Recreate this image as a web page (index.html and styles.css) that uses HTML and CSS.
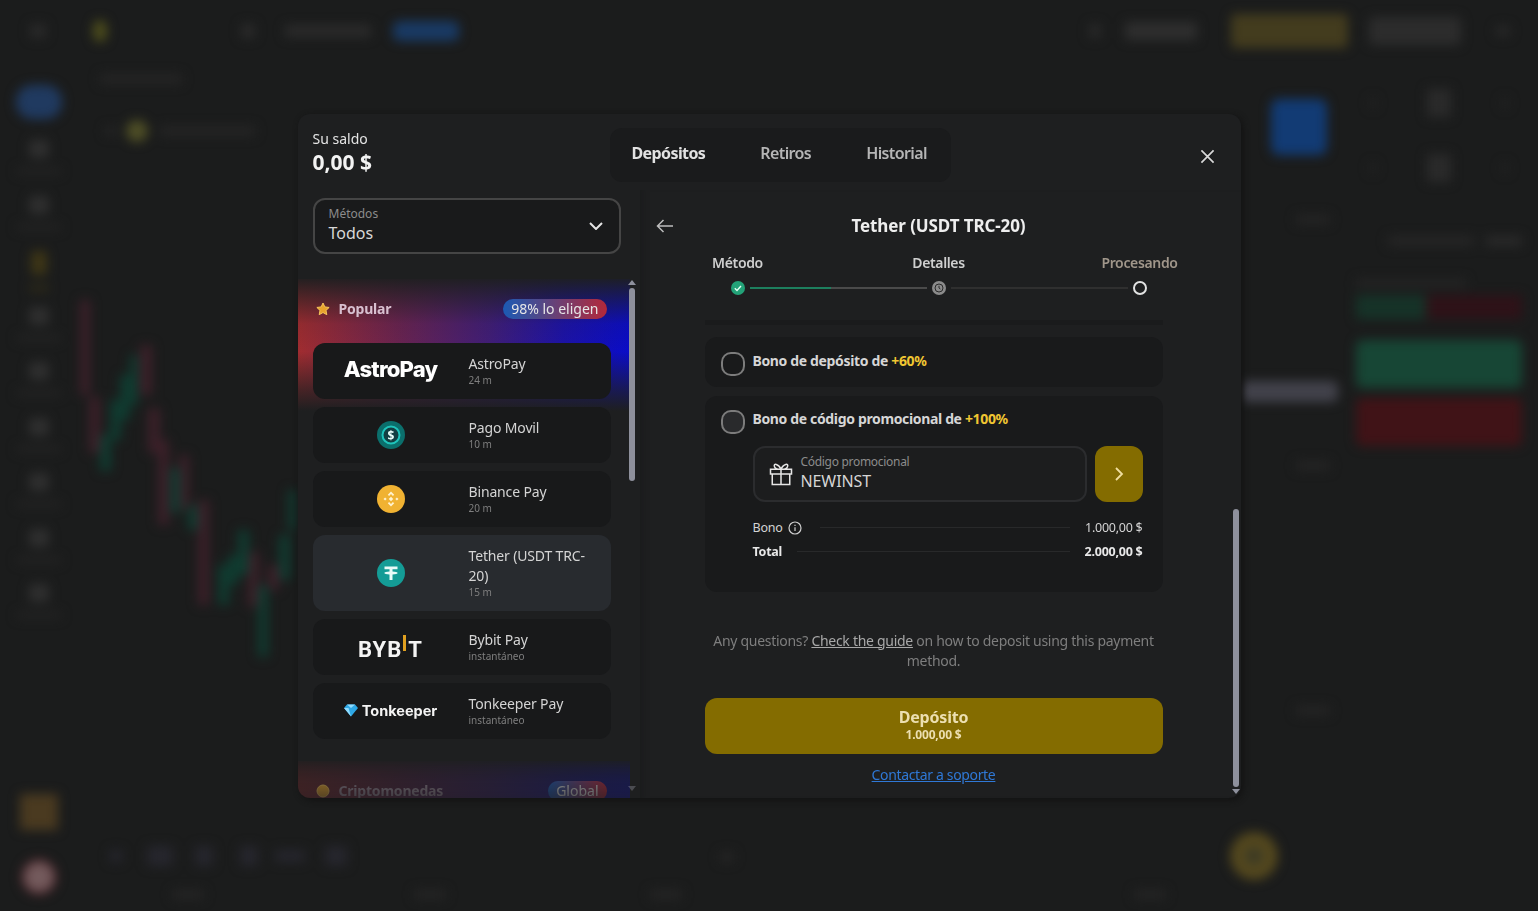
FILE: index.html
```html
<!DOCTYPE html>
<html lang="es">
<head>
<meta charset="utf-8">
<title>Depósitos</title>
<link rel="stylesheet" href="styles.css">
</head>
<body>
<div class="backdrop">
  <header class="topbar">
    <div class="tb-group">
      <span class="blob b-menu"></span>
      <span class="blob b-logo"></span>
      <span class="blob b-search"></span>
      <span class="blob b-reg"></span>
      <span class="blob b-login"></span>
    </div>
    <div class="tb-group">
      <span class="blob b-bell"></span>
      <span class="blob b-bal"></span>
      <span class="blob b-gold"></span>
      <span class="blob b-with"></span>
      <span class="blob b-more"></span>
    </div>
  </header>
  <div class="main">
    <nav class="sidebar">
      <span class="blob side-top"></span>
      <div class="nav-item"><i></i><b></b></div>
      <div class="nav-item"><i></i><b></b></div>
      <div class="nav-item nav-gold"><i></i><b></b></div>
      <div class="nav-item"><i></i><b></b></div>
      <div class="nav-item"><i></i><b></b></div>
      <div class="nav-item"><i></i><b></b></div>
      <div class="nav-item"><i></i><b></b></div>
      <div class="nav-item"><i></i><b></b></div>
      <div class="nav-item"><i></i><b></b></div>
      <span class="blob side-orange"></span>
      <span class="blob side-red"></span>
    </nav>
    <svg class="chart" viewBox="78 62 1262 849" aria-hidden="true">
      <g class="c-red">
        <rect x="80" y="300" width="10" height="95"/><rect x="89" y="397" width="11" height="56"/>
        <rect x="140" y="345" width="12" height="50"/><rect x="148" y="408" width="12" height="45"/>
        <rect x="158" y="440" width="11" height="85"/><rect x="179" y="455" width="10" height="55"/>
        <rect x="198" y="500" width="11" height="105"/><rect x="248" y="552" width="11" height="55"/>
        <rect x="268" y="565" width="11" height="25"/>
      </g>
      <g class="c-green">
        <rect x="100" y="435" width="11" height="36"/><rect x="110" y="400" width="11" height="40"/>
        <rect x="120" y="375" width="10" height="45"/><rect x="130" y="355" width="8" height="50"/>
        <rect x="170" y="468" width="10" height="45"/><rect x="188" y="505" width="10" height="25"/>
        <rect x="218" y="565" width="11" height="40"/><rect x="228" y="555" width="10" height="30"/>
        <rect x="238" y="530" width="11" height="45"/><rect x="258" y="585" width="10" height="72"/>
        <rect x="279" y="535" width="11" height="45"/><rect x="288" y="490" width="8" height="40"/>
      </g>
      <rect class="c-faint" x="100" y="74" width="82" height="10"/>
      <rect class="c-faint" x="105" y="127" width="12" height="8"/>
      <circle class="c-yellow" cx="137" cy="131" r="11"/>
      <rect class="c-faint" x="160" y="126" width="95" height="10"/>
      <g class="c-tool">
        <rect x="110" y="850" width="12" height="12"/><rect x="147" y="846" width="26" height="20"/>
        <rect x="195" y="846" width="18" height="20"/><rect x="240" y="846" width="18" height="20"/>
        <rect x="275" y="850" width="30" height="12"/><rect x="325" y="846" width="22" height="20"/>
      </g>
      <g class="c-faint">
        <rect x="172" y="890" width="32" height="9"/><rect x="414" y="890" width="32" height="9"/>
        <rect x="650" y="890" width="32" height="9"/><rect x="1134" y="890" width="32" height="9"/>
        <rect x="1296" y="215" width="34" height="9"/><rect x="1296" y="461" width="34" height="9"/>
        <rect x="1296" y="706" width="34" height="9"/><rect x="720" y="852" width="14" height="10"/>
      </g>
      <rect class="c-blue" x="1271" y="99" width="56" height="56" rx="8"/>
      <rect class="c-pill" x="1240" y="381" width="98" height="21" rx="6"/>
      <circle class="c-coin" cx="1254" cy="856" r="24"/>
      <circle class="c-coin-in" cx="1254" cy="856" r="9"/>
    </svg>
    <aside class="trade">
      <div class="tr-row"><i></i><b></b><i></i></div>
      <div class="tr-row"><i></i><b></b><i></i></div>
      <div class="tr-pills"><span></span><span></span></div>
      <span class="tr-label"></span>
      <div class="tr-bar"><span class="tr-up"></span><span class="tr-down"></span></div>
      <div class="tr-btn tr-buy"></div>
      <div class="tr-btn tr-sell"></div>
    </aside>
  </div>
</div>

<div class="overlay">
  <section class="modal">
    <header class="modal-head">
      <div class="balance">
        <span class="balance-label">Su saldo</span>
        <strong class="balance-value">0,00 $</strong>
      </div>
      <div class="tabs">
        <span class="tab tab-active">Depósitos</span>
        <span class="tab">Retiros</span>
        <span class="tab">Historial</span>
      </div>
      <svg class="close" viewBox="0 0 16 16" aria-label="Cerrar"><path d="M1.5 1.5l13 13M14.5 1.5l-13 13"/></svg>
    </header>

    <div class="modal-body">
      <div class="left-pane">
        <div class="select">
          <div class="select-text">
            <span class="select-label">Métodos</span>
            <span class="select-value">Todos</span>
          </div>
          <svg class="select-arrow" viewBox="0 0 14 8"><path d="M1 1l6 6 6-6"/></svg>
        </div>
        <div class="list-wrap">
          <div class="list">
            <div class="group">
              <div class="group-head">
                <svg class="star" viewBox="0 0 24 24"><path d="M12 3l2.800 5.900 6.400.8-4.700 4.400 1.200 6.400L12 17.300l-5.700 3.200 1.200-6.400L2.800 9.700l6.400-.8z"/></svg>
                <span class="group-title">Popular</span>
                <span class="badge">98% lo eligen</span>
              </div>
              <div class="method">
                <div class="method-logo"><span class="logo-astro">AstroPay</span></div>
                <div class="method-info"><span class="m-name">AstroPay</span><span class="m-time">24 m</span></div>
              </div>
              <div class="method">
                <div class="method-logo">
                  <svg class="coin" viewBox="0 0 28 28"><circle cx="14" cy="14" r="14" fill="#0b6f6c"/><circle cx="14" cy="14" r="8.500" fill="#123f42" stroke="#1fc4bb" stroke-width="2"/><text x="14" y="18.500" text-anchor="middle" class="coin-text">$</text></svg>
                </div>
                <div class="method-info"><span class="m-name">Pago Movil</span><span class="m-time">10 m</span></div>
              </div>
              <div class="method">
                <div class="method-logo">
                  <svg class="coin" viewBox="0 0 28 28"><circle cx="14" cy="14" r="14" fill="#f0b232"/><g fill="#fff3d0"><path d="M14 6.500l3.200 3.200-1.300 1.300L14 9.100l-1.900 1.900-1.300-1.300z"/><path d="M14 21.500l3.200-3.200-1.300-1.300L14 18.900l-1.900-1.900-1.300 1.300z"/><path d="M6.500 14l1.600-1.600 1.600 1.600-1.600 1.600z"/><path d="M18.300 14l1.600-1.600 1.600 1.600-1.600 1.600z"/><path d="M14 11.700l2.300 2.300-2.300 2.300-2.300-2.300z"/></g></svg>
                </div>
                <div class="method-info"><span class="m-name">Binance Pay</span><span class="m-time">20 m</span></div>
              </div>
              <div class="method method-active">
                <div class="method-logo">
                  <svg class="coin" viewBox="0 0 28 28"><circle cx="14" cy="14" r="14" fill="#149c96"/><path fill="#e8fbf8" d="M7.500 7.500h13v2.800h-5v2.300c3 .15 5.200.7 5.200 1.400s-2.200 1.250-5.200 1.400v5.600h-3v-5.600c-3-.15-5.200-.7-5.200-1.400s2.200-1.250 5.200-1.400v-2.300h-5z"/></svg>
                </div>
                <div class="method-info"><span class="m-name">Tether (USDT TRC-20)</span><span class="m-time">15 m</span></div>
              </div>
              <div class="method">
                <div class="method-logo"><span class="logo-bybit">BYB<i class="bybit-bar"></i>T</span></div>
                <div class="method-info"><span class="m-name">Bybit Pay</span><span class="m-time">instantáneo</span></div>
              </div>
              <div class="method">
                <div class="method-logo logo-ton">
                  <svg class="gem" viewBox="0 0 14 12"><path fill="#2ea8e6" d="M0 3.500L3 0h8l3 3.500L7 12z"/><path fill="#8fdcff" d="M3 0h8l-4 3.500zM0 3.500h4.500L7 12z"/></svg>
                  <span>Tonkeeper</span>
                </div>
                <div class="method-info"><span class="m-name">Tonkeeper Pay</span><span class="m-time">instantáneo</span></div>
              </div>
            </div>
            <div class="group group-next">
              <div class="group-head">
                <svg class="star" viewBox="0 0 24 24"><circle cx="12" cy="12" r="9"/></svg>
                <span class="group-title">Criptomonedas</span>
                <span class="badge">Global</span>
              </div>
            </div>
          </div>
          <div class="scroll scroll-left"><i class="sc-up"></i><b></b><i class="sc-down"></i></div>
        </div>
      </div>

      <div class="right-pane">
        <div class="title-row">
          <svg class="back" viewBox="0 0 18 14"><path d="M17 7H1.500M7.500 1l-6 6 6 6"/></svg>
          <h2 class="title">Tether (USDT TRC-20)</h2>
          <span></span>
        </div>
        <div class="steps">
          <span class="step-label">Método</span>
          <span class="step-label">Detalles</span>
          <span class="step-label step-todo">Procesando</span>
        </div>
        <div class="track">
          <svg class="dot" viewBox="0 0 14 14"><circle cx="7" cy="7" r="7" fill="#23a278"/><path d="M3.800 7.200l2.200 2.200 4-4.300" fill="none" stroke="#e6fff4" stroke-width="1.400"/></svg>
          <span class="line"><i></i></span>
          <svg class="dot" viewBox="0 0 14 14"><circle cx="7" cy="7" r="7" fill="#8b8b8b"/><circle cx="7" cy="7" r="4" fill="none" stroke="#2a2a2a" stroke-width="1"/><path d="M7 4.800V7l1.400 1" fill="none" stroke="#2a2a2a" stroke-width="1"/></svg>
          <span class="line line-off"></span>
          <span class="dot dot-empty"></span>
        </div>
        <div class="scroll-area">
          <div class="content">
            <div class="card-sliver"></div>
            <div class="card card-simple">
              <span class="radio"></span>
              <span class="card-title">Bono de depósito de <em>+60%</em></span>
            </div>
            <div class="card card-promo">
              <div class="promo-head">
                <span class="radio radio-fill"></span>
                <span class="card-title">Bono de código promocional de <em>+100%</em></span>
              </div>
              <div class="promo-form">
                <div class="promo-input">
                  <svg class="gift" viewBox="0 0 24 24"><path d="M3 8h18v4H3zM4.500 12v9h15v-9M12 8v13M12 8C10 3 5 2.500 6.500 6c.4 1 2 2 5.500 2zM12 8c2-5 7-5.500 5.500-2-.4 1-2 2-5.500 2z"/></svg>
                  <div class="promo-text">
                    <span class="promo-label">Código promocional</span>
                    <span class="promo-value">NEWINST</span>
                  </div>
                </div>
                <div class="promo-go"><svg viewBox="0 0 10 16"><path d="M2 2l6 6-6 6"/></svg></div>
              </div>
              <div class="sum-row">
                <span class="sum-key">Bono</span>
                <svg class="info" viewBox="0 0 14 14"><circle cx="7" cy="7" r="6"/><path d="M7 6.300v3.700M7 3.800v1.100"/></svg>
                <span class="sum-line sum-line-wide"></span>
                <span class="sum-val">1.000,00 $</span>
              </div>
              <div class="sum-row sum-total">
                <span class="sum-key">Total</span>
                <span class="sum-line"></span>
                <span class="sum-val">2.000,00 $</span>
              </div>
            </div>
            <p class="guide">Any questions? <a href="#">Check the guide</a> on how to deposit using this payment method.</p>
            <button class="deposit" type="button"><span class="dep-main">Depósito</span><span class="dep-sub">1.000,00 $</span></button>
            <a class="support" href="#">Contactar a soporte</a>
          </div>
          <div class="scroll scroll-right"><b></b><i class="sc-down"></i></div>
        </div>
      </div>
    </div>
  </section>
</div>
</body>
</html>
```

FILE: styles.css
```css
* { box-sizing: border-box; }
html, body { height: 100%; }
body {
  margin: 0;
  background: #1b1c1c;
  font-family: "Noto Sans", "Open Sans", sans-serif;
  color: #e9e9e9;
  overflow: hidden;
}

/* Blurred page behind the dialog */
.backdrop {
  position: fixed;
  inset: 0;
  display: flex;
  flex-direction: column;
  filter: blur(5.500px);
}
.blob { display: block; flex: none; }
.topbar {
  height: 62px;
  flex: none;
  display: flex;
  justify-content: space-between;
  align-items: center;
  padding: 0 28px 0 30px;
}
.tb-group { display: flex; align-items: center; }
.b-menu { width: 16px; height: 14px; background: #292929; }
.b-logo { width: 14px; height: 22px; margin-left: 47px; background: #4c4c1c; border-radius: 7px; }
.b-search { width: 14px; height: 14px; margin-left: 134px; background: #2a2a2a; }
.b-reg { width: 86px; height: 12px; margin-left: 30px; background: #2b2b2b; }
.b-login { width: 66px; height: 20px; margin-left: 22px; background: #193a64; border-radius: 6px; }
.b-bell { width: 12px; height: 14px; background: #282828; }
.b-bal { width: 72px; height: 18px; margin-left: 24px; background: #2e2e2e; }
.b-gold { width: 117px; height: 34px; margin-left: 34px; background: #433c1e; border-radius: 4px; }
.b-with { width: 92px; height: 28px; margin-left: 21px; background: #2c2c2c; border-radius: 4px; }
.b-more { width: 14px; height: 10px; margin-left: 35px; background: #282828; }

.main { flex: 1; display: flex; min-height: 0; }
.sidebar {
  width: 78px;
  flex: none;
  display: flex;
  flex-direction: column;
  align-items: center;
  padding: 23px 0 19px;
}
.side-top { width: 46px; height: 34px; background: #203a60; border-radius: 16px; margin-bottom: 20px; }
.nav-item { height: 55.500px; display: flex; flex-direction: column; align-items: center; gap: 10px; padding-top: 1px; }
.nav-item i { width: 20px; height: 18px; background: #2f2f2f; border-radius: 4px; }
.nav-item b { width: 44px; height: 6px; background: #242424; }
.nav-gold i { background: #3e3616; height: 24px; width: 16px; }
.nav-gold b { background: #302c18; width: 20px; }
.side-orange { width: 38px; height: 36px; margin-top: auto; background: #4a3a20; }
.side-red { width: 30px; height: 30px; margin-top: 32px; background: #735a5c; border-radius: 50%; box-shadow: 0 0 0 3px #4c2026; }

.chart { flex: 1; min-width: 0; height: 100%; }
.c-red { fill: #3c2029; }
.c-green { fill: #103b30; }
.c-faint { fill: #252525; }
.c-yellow { fill: #4e4e26; }
.c-tool { fill: #26262d; }
.c-blue { fill: #123b74; }
.c-pill { fill: #42424b; }
.c-coin { fill: #54481e; }
.c-coin-in { fill: #3c3a24; }

.trade { width: 198px; flex: none; display: flex; flex-direction: column; padding: 26px 16px 0; }
.tr-row { display: flex; align-items: center; justify-content: space-between; height: 30px; margin-bottom: 35px; padding: 0 14px; }
.tr-row i { width: 6px; height: 10px; background: #232323; }
.tr-row b { width: 24px; height: 28px; background: #2a2a2a; }
.tr-pills { display: flex; justify-content: flex-end; gap: 12px; margin-top: 18px; height: 12px; }
.tr-pills span { height: 10px; width: 36px; background: #2a2a2a; }
.tr-pills span:first-child { width: 86px; background: #262626; }
.tr-label { width: 110px; height: 8px; background: #252525; margin-top: 31px; }
.tr-bar { display: flex; height: 24px; margin-top: 8px; }
.tr-up { width: 70px; background: #163328; }
.tr-down { flex: 1; background: #2e1218; }
.tr-btn { height: 48px; border-radius: 6px; }
.tr-buy { background: #174635; margin-top: 21px; }
.tr-sell { background: #401317; margin-top: 10px; }

/* Dialog */
.overlay {
  position: fixed;
  inset: 0;
  display: flex;
  align-items: center;
  justify-content: center;
}
.modal {
  width: 943px;
  height: 684px;
  background: #1e1f20;
  border-radius: 12px;
  display: flex;
  flex-direction: column;
  overflow: hidden;
  box-shadow: 2px 2px 6px #121212;
}
.modal-head {
  height: 76px;
  flex: none;
  display: flex;
  align-items: flex-start;
  padding: 14px 26px 0 15px;
}
.balance { display: flex; flex-direction: column; width: 297px; }
.balance-label { font-size: 14px; line-height: 22px; color: #e4e4e4; }
.balance-value { font-size: 21px; line-height: 24px; font-weight: 700; color: #f3f3f3; }
.tabs {
  display: flex;
  width: 341px;
  height: 54px;
  align-items: center;
  gap: 55px;
  padding: 0 22px 4px;
  background: #1a1b1c;
  border-radius: 12px;
}
.tab { font-size: 16px; font-weight: 600; color: #b5b5b5; letter-spacing: -0.6px; }
.tab-active { color: #e2e2e2; font-weight: 700; }
.close { width: 15px; height: 15px; margin: 21px 0 0 auto; fill: none; stroke: #d8d8d8; stroke-width: 1.800; }

.modal-body { flex: 1; min-height: 0; display: flex; }
.left-pane { width: 342px; flex: none; display: flex; flex-direction: column; padding-top: 8px; }
.select {
  margin-left: 15px;
  width: 308px;
  height: 56px;
  flex: none;
  border: 2px solid #454545;
  border-radius: 12px;
  background: #191a1b;
  display: flex;
  align-items: center;
  justify-content: space-between;
  padding: 0 16px 0 14px;
}
.select-text { display: flex; flex-direction: column; padding-bottom: 1px; }
.select-label { font-size: 12px; line-height: 16px; color: #8c8c8c; }
.select-value { font-size: 16px; line-height: 22px; color: #d8d8d8; }
.select-arrow { width: 14px; height: 8px; fill: none; stroke: #e4e4e4; stroke-width: 2; }

.list-wrap { position: relative; flex: 1; min-height: 0; margin-top: 25px; }
.list {
  width: 332px;
  height: 100%;
  overflow: hidden;
  -webkit-mask-image: linear-gradient(#000 calc(100% - 50px), rgba(0,0,0,.28) 100%);
  mask-image: linear-gradient(#000 calc(100% - 50px), rgba(0,0,0,.28) 100%);
}
.group {
  padding: 0 19px 0 15px;
  background:
    linear-gradient(180deg, rgba(30,31,32,.95) 0, rgba(30,31,32,.1) 34%, rgba(30,31,32,0) 55%, rgba(30,31,32,.7) 85%, #1e1f20 100%) 0 0 / 100% 132px no-repeat,
    linear-gradient(90deg, #a02c30 0, #6a2350 30%, #401d78 58%, #1c12a8 80%, #0a0cc8 100%) 0 0 / 100% 132px no-repeat;
}
.group-head { display: flex; align-items: center; height: 64px; padding-bottom: 4px; }
.star { width: 16px; height: 16px; margin-left: 2px; fill: #e8a32c; stroke: #f7c65a; stroke-width: 1.500; }
.group-title { margin-left: 8px; font-size: 14px; font-weight: 700; color: #d8c0d0; letter-spacing: -0.2px; }
.badge {
  margin-left: auto;
  margin-right: -15px;
  transform: translateX(-19px);
  height: 20px;
  line-height: 20px;
  padding: 0 8px;
  border-radius: 10px;
  font-size: 14px;
  color: #e6e6e6;
  background: linear-gradient(90deg, #1b5ab4, #b4283a);
}
.method {
  height: 56px;
  margin-bottom: 8px;
  border-radius: 12px;
  background: #18191a;
  display: flex;
  align-items: center;
}
.method-active { height: 76px; background: #282b2f; }
.method-logo { width: 156px; flex: none; display: flex; align-items: center; justify-content: center; }
.method-info { display: flex; flex-direction: column; padding: 0 14px 2px 0; }
.m-name { font-size: 14px; line-height: 20px; color: #d4d4d4; letter-spacing: -0.15px; }
.m-time { font-size: 10px; line-height: 12px; color: #7f7f7f; }
.coin { width: 28px; height: 28px; display: block; }
.coin-text { font: 700 12px "Noto Sans", sans-serif; fill: #eafffb; }
.logo-astro { font-family: Inter, sans-serif; font-size: 22px; font-weight: 800; letter-spacing: -0.8px; color: #fff; margin-top: -4px; }
.logo-bybit { font-family: Roboto, sans-serif; font-size: 22px; font-weight: 700; letter-spacing: 1px; color: #f4f4f4; display: flex; align-items: flex-start; margin-top: 6px; }
.bybit-bar { width: 3px; height: 16px; margin: -2px 2px 0 1px; background: #e0a020; }
.logo-ton { gap: 4px; font-family: Inter, sans-serif; font-size: 14.500px; font-weight: 700; color: #f4f4f4; }
.gem { width: 14px; height: 13px; }
.group-next { margin-top: 22px; height: 62px; }
.group-next .group-title { color: #9a8a9a; }

.scroll { position: absolute; display: flex; flex-direction: column; align-items: center; }
.scroll b { display: block; width: 6px; background: #8e909c; border-radius: 3px; }
.sc-up, .sc-down { display: block; width: 0; height: 0; border-left: 4px solid transparent; border-right: 4px solid transparent; }
.sc-up { border-bottom: 5px solid #8e909c; margin-bottom: 3px; }
.sc-down { border-top: 5px solid #8e909c; }
.scroll-left { left: 330px; top: 1px; }
.scroll-left b { height: 193px; }
.scroll-left .sc-down { margin-top: 305px; opacity: .4; }
.scroll-right { right: 1px; top: 189px; }
.scroll-right b { height: 278px; margin-bottom: 2px; }

.right-pane { flex: 1; min-width: 0; display: flex; flex-direction: column; box-shadow: inset 8px 0 6px -6px #1a1b1c; }
.title-row {
  display: grid;
  grid-template-columns: 1fr auto 1fr;
  align-items: center;
  height: 24px;
  margin: 24px 3px 0 0;
}
.back { width: 18px; height: 14px; margin-left: 16px; fill: none; stroke: #bdbdbd; stroke-width: 1.500; }
.title { margin: 0; font-size: 17px; font-weight: 700; color: #eeeeee; letter-spacing: -0.1px; }
.steps { display: grid; grid-template-columns: repeat(3, 1fr); width: 603px; margin: 15px 0 0 -2.500px; text-align: center; }
.step-label { font-size: 14px; line-height: 20px; font-weight: 600; color: #cfcfcf; letter-spacing: -0.35px; }
.step-todo { color: #a0968a; }
.track { display: flex; align-items: center; margin: 8px 94px 0 91px; height: 14px; }
.dot { width: 14px; height: 14px; flex: none; display: block; }
.dot-empty { border: 2px solid #e2e2e2; border-radius: 50%; }
.line { flex: 1; height: 2px; margin: 0 5px; background: #4a4a4a; display: block; }
.line i { display: block; width: 46%; height: 100%; background: #1d7f5e; }
.line-off { background: #2f2f2f; }

.scroll-area { position: relative; flex: 1; min-height: 0; margin-top: 25px; }
.content { width: 458px; margin-left: 65px; display: flex; flex-direction: column; }
.card-sliver { height: 5px; background: #1a1b1c; }
.card { background: #191a1b; border-radius: 12px; }
.card-simple { margin-top: 12px; height: 50px; display: flex; align-items: flex-start; padding: 15px 16px 0; gap: 8px; }
.radio { width: 24px; height: 24px; flex: none; border: 2px solid #7c7c7c; border-radius: 10px; }
.radio-fill { background: #292a2c; }
.card-title { font-size: 14px; line-height: 20px; font-weight: 700; color: #d6d6d6; letter-spacing: -0.35px; margin-top: -1px; }
.card-title em { font-style: normal; color: #f0c632; }
.card-promo { margin-top: 9px; height: 196px; padding: 14px 20px 0 16px; }
.promo-head { display: flex; gap: 8px; }
.promo-form { display: flex; gap: 8px; margin: 12px 0 0 32px; }
.promo-input { flex: 1; height: 56px; border: 2px solid #2b2c2e; border-radius: 12px; background: #1c1d1e; display: flex; align-items: center; padding: 0 0 0 12px; gap: 6px; }
.gift { width: 28px; height: 28px; fill: none; stroke: #e6e6e6; stroke-width: 1.300; }
.promo-text { display: flex; flex-direction: column; padding-bottom: 2px; }
.promo-label { font-size: 12px; line-height: 16px; color: #8c8c8c; letter-spacing: -0.3px; }
.promo-value { font-size: 16px; line-height: 22px; color: #d6d6d6; letter-spacing: -0.1px; }
.promo-go { width: 48px; height: 56px; border-radius: 12px; background: #846c00; display: flex; align-items: center; justify-content: center; }
.promo-go svg { width: 10px; height: 16px; fill: none; stroke: #f0dfa0; stroke-width: 1.800; }
.sum-row { display: flex; align-items: center; height: 24px; margin-left: 32px; font-size: 12.500px; color: #d4d4d4; letter-spacing: -0.25px; }
.promo-form + .sum-row { margin-top: 14px; }
.info { width: 14px; height: 14px; margin-left: 6px; fill: none; stroke: #cfcfcf; stroke-width: 1.200; }
.sum-line { flex: 1; height: 1px; background: #28292a; margin: 0 15px; }
.sum-line-wide { margin-left: 18px; }
.sum-total { font-weight: 700; color: #e8e8e8; }
.guide { margin: 39px 0 0; font-size: 14px; line-height: 20px; text-align: center; color: #7e7e7e; letter-spacing: -0.29px; }
.guide a { color: #a8a8a8; }
.deposit {
  margin-top: 27px;
  height: 56px;
  border: 0;
  border-radius: 12px;
  background: #846c00;
  display: flex;
  flex-direction: column;
  align-items: center;
  justify-content: center;
  font-family: inherit;
  color: #ecdfb0;
}
.dep-main { font-size: 16px; line-height: 19px; font-weight: 700; letter-spacing: -0.2px; }
.dep-sub { font-size: 12px; line-height: 16px; font-weight: 700; letter-spacing: -0.2px; }
.support { margin-top: 11px; text-align: center; font-size: 14px; line-height: 20px; color: #2f78d6; letter-spacing: -0.35px; }
```
